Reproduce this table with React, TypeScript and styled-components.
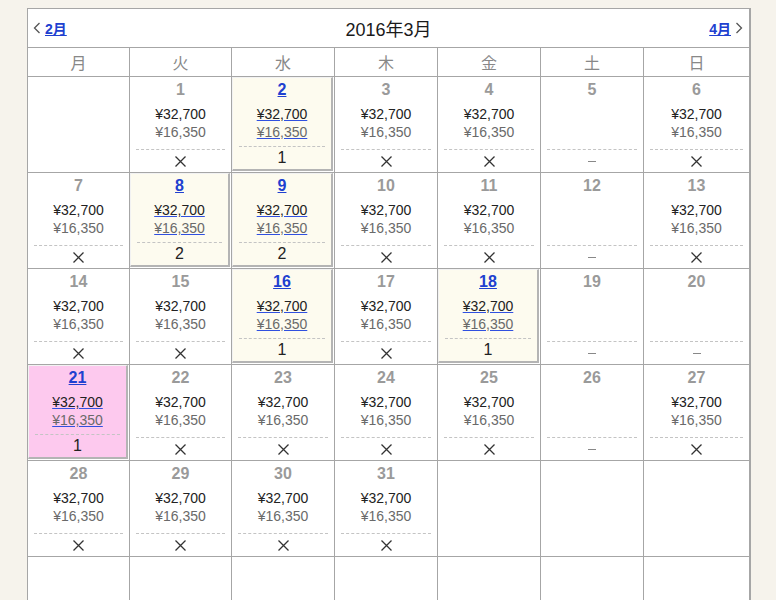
import React from "react";
import styled, { createGlobalStyle } from "styled-components";

const Global = createGlobalStyle`
  html, body { margin: 0; padding: 0; background: #f6f3ec; }
  body { padding-top: 8px; font-family: "Liberation Sans", "Noto Sans CJK JP", sans-serif; }
`;

const Calendar = styled.div`
  width: 724px;
  margin-left: 27px;
  box-sizing: border-box;
  background: #fff;
  border-top: 1px solid #a6a6a6;
  border-left: 1px solid #a6a6a6;
  border-right: 2px solid #a6a6a6;
`;

const TitleBar = styled.div`
  height: 38px;
  display: flex;
  align-items: center;
  justify-content: space-between;
  padding: 0 6px 0 5px;
  border-bottom: 1px solid #a6a6a6;
  position: relative;
`;

const Title = styled.div`
  position: absolute;
  left: 0;
  right: 0;
  text-align: center;
  font-size: 18px;
  color: #1a1a1a;
  pointer-events: none;
`;

const Nav = styled.a`
  display: flex;
  align-items: center;
  gap: 4px;
  font-size: 14px;
  font-weight: bold;
  color: #2040d0;
  z-index: 1;
`;

const NavLabel = styled.span`
  text-decoration: underline #2040d0;
  color: #2040d0;
`;

const Row = styled.div<{ $h: number }>`
  display: grid;
  grid-template-columns: 102px 102px 103px 103px 103px 103px 1fr;
  height: ${(p) => p.$h}px;
  border-bottom: 1px solid #a6a6a6;
`;

const Head = styled.div<{ $last?: boolean }>`
  display: flex;
  align-items: center;
  justify-content: center;
  font-size: 16px;
  color: #888;
  font-family: "Noto Sans CJK JP", sans-serif;
  border-right: ${(p) => (p.$last ? "none" : "1px solid #a6a6a6")};
`;

const Cell = styled.div<{ $last?: boolean }>`
  display: flex;
  flex-direction: column;
  border-right: ${(p) => (p.$last ? "none" : "1px solid #a6a6a6")};
  min-width: 0;
`;

const Inner = styled.div<{ $kind: "plain" | "avail" | "selected" }>`
  flex: 1;
  display: flex;
  flex-direction: column;
  align-items: center;
  padding-top: 3px;
  background: ${(p) =>
    p.$kind === "selected" ? "#fdc9ee" : p.$kind === "avail" ? "#fdfbef" : "#fff"};
  ${(p) =>
    p.$kind !== "plain"
      ? `
    margin: 0 1px 1px 0;
    border-top: 1px solid #f2f2f2;
    border-left: 1px solid #f2f2f2;
    border-right: 2px solid #b4b4b4;
    border-bottom: 2px solid #b4b4b4;
    padding-top: 2px;
  `
      : ""}
`;

const DayNum = styled.div<{ $link?: boolean }>`
  height: 20px;
  line-height: 20px;
  font-size: 16px;
  font-weight: bold;
  color: ${(p) => (p.$link ? "#2040d0" : "#9a9a9a")};
  text-decoration: ${(p) => (p.$link ? "underline #2040d0" : "none")};
`;

const Prices = styled.div`
  margin-top: 5px;
  display: flex;
  flex-direction: column;
  align-items: center;
`;

const Price = styled.span<{ $sub?: boolean; $link?: boolean }>`
  height: 18px;
  line-height: 18px;
  font-size: 14px;
  color: ${(p) => (p.$sub ? "#6a6a6a" : "#222")};
  text-decoration: ${(p) => (p.$link ? "underline #3050e0" : "none")};
`;

const Status = styled.div`
  margin-top: auto;
  align-self: stretch;
  margin-left: 6px;
  margin-right: 6px;
  height: 22px;
  border-top: 1px dashed #c4c4c4;
  display: flex;
  align-items: center;
  justify-content: center;
  font-size: 16px;
  color: #222;
`;

const Dash = styled.span`
  display: block;
  width: 8px;
  height: 1px;
  background: #888;
`;

const CrossIcon = () => (
  <svg width="13" height="13" viewBox="0 0 13 13">
    <path d="M1.5 1.5 L11.5 11.5 M11.5 1.5 L1.5 11.5" stroke="#333" strokeWidth="1.3" fill="none" />
  </svg>
);

const ChevronIcon = ({ dir }: { dir: "l" | "r" }) => (
  <svg width="8" height="12" viewBox="0 0 8 12">
    <path
      d={dir === "l" ? "M6.5 1 L1.5 6 L6.5 11" : "M1.5 1 L6.5 6 L1.5 11"}
      stroke="#555"
      strokeWidth="1.3"
      fill="none"
    />
  </svg>
);

type Day = {
  d: number;
  status: "x" | "-" | number;
  kind?: "plain" | "avail" | "selected";
};

const X = (d: number): Day => ({ d, status: "x" });
const N = (d: number): Day => ({ d, status: "-" });
const A = (d: number, n: number, sel = false): Day => ({
  d,
  status: n,
  kind: sel ? "selected" : "avail",
});

const weeks: (Day | null)[][] = [
  [null, X(1), A(2, 1), X(3), X(4), N(5), X(6)],
  [X(7), A(8, 2), A(9, 2), X(10), X(11), N(12), X(13)],
  [X(14), X(15), A(16, 1), X(17), A(18, 1), N(19), N(20)],
  [A(21, 1, true), X(22), X(23), X(24), X(25), N(26), X(27)],
  [X(28), X(29), X(30), X(31), null, null, null],
  [null, null, null, null, null, null, null],
];

const heads = ["月", "火", "水", "木", "金", "土", "日"];

function DayCell({ day, last }: { day: Day | null; last: boolean }) {
  if (!day) return <Cell $last={last} />;
  const kind = day.kind ?? "plain";
  const link = kind !== "plain";
  return (
    <Cell $last={last}>
      <Inner $kind={kind}>
        <DayNum $link={link}>{day.d}</DayNum>
        {day.status !== "-" && (
          <Prices>
            <Price $link={link}>¥32,700</Price>
            <Price $sub $link={link}>¥16,350</Price>
          </Prices>
        )}
        <Status>
          {day.status === "x" ? <CrossIcon /> : day.status === "-" ? <Dash /> : day.status}
        </Status>
      </Inner>
    </Cell>
  );
}

export default function App() {
  return (
    <>
      <Global />
      <Calendar>
        <TitleBar>
          <Nav>
            <ChevronIcon dir="l" />
            <NavLabel>2月</NavLabel>
          </Nav>
          <Title>2016年3月</Title>
          <Nav>
            <NavLabel>4月</NavLabel>
            <ChevronIcon dir="r" />
          </Nav>
        </TitleBar>
        <Row $h={28}>
          {heads.map((h, i) => (
            <Head key={h} $last={i === 6}>
              {h}
            </Head>
          ))}
        </Row>
        {weeks.map((w, wi) => (
          <Row key={wi} $h={95}>
            {w.map((day, i) => (
              <DayCell key={i} day={day} last={i === 6} />
            ))}
          </Row>
        ))}
      </Calendar>
    </>
  );
}
